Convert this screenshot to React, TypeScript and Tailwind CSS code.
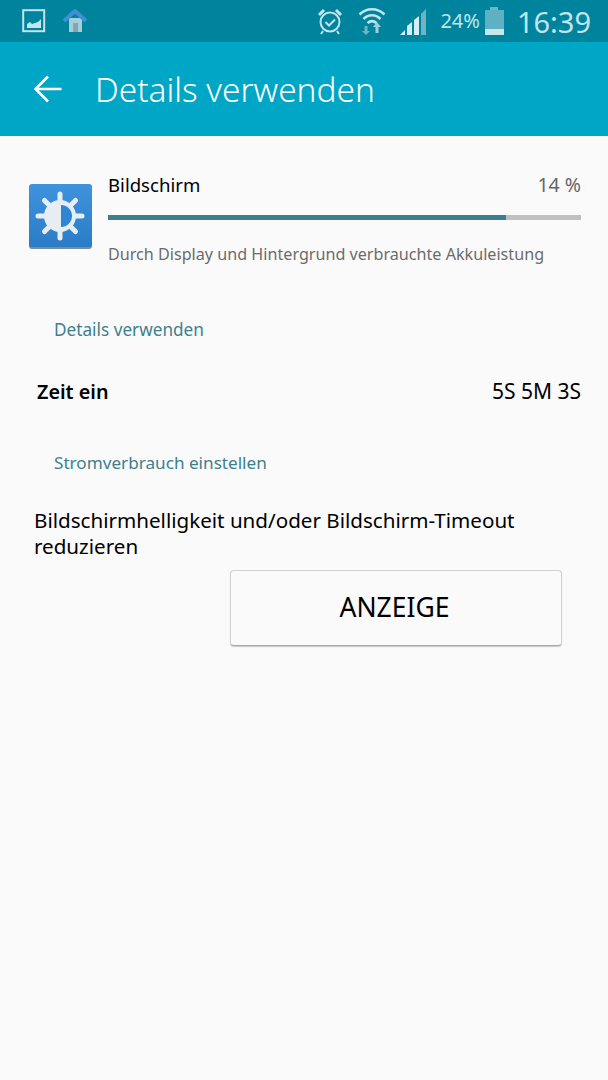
export default function App() {
  return (
    <div className="w-[608px] h-[1080px] bg-[#fafafa] flex flex-col overflow-hidden" style={{ fontFamily: '"Noto Sans", sans-serif' }}>
      <div className="h-[42px] bg-[#00849d] flex items-center pl-[22px] pr-[17px] text-[#c0e5ec]">
        <svg width="24" height="24" viewBox="0 0 24 24" className="text-[#c4e4ea]">
          <rect x="1.2" y="1.2" width="21" height="21" fill="none" stroke="currentColor" strokeWidth="2" />
          <path d="M5 19v-4l3-2 2 2 3-1 3-1 3-3v9z" fill="currentColor" />
        </svg>
        <svg width="26" height="26" viewBox="0 0 26 26" className="ml-[16px]">
          <rect x="7" y="10" width="13" height="14" fill="#a9cdd8" />
          <rect x="11" y="15" width="5" height="9" fill="#7fa6b4" />
          <path d="M2 13 13 3l11 10" fill="none" stroke="#3f8fd8" strokeWidth="4" strokeLinejoin="round" />
        </svg>
        <div className="flex-1" />
        <svg width="28" height="28" viewBox="0 0 28 28" fill="none" stroke="currentColor" className="-mt-[1px]">
          <circle cx="14" cy="15" r="9.5" strokeWidth="2" />
          <path d="M9.5 15l3.5 3.5 6-6" strokeWidth="2" />
          <path d="M3 8l5-5M25 8l-5-5" strokeWidth="3" />
          <path d="M7 24l-2 3M21 24l2 3" strokeWidth="2" />
        </svg>
        <svg width="28" height="30" viewBox="0 0 28 30" className="ml-[14px]" fill="none" stroke="currentColor">
          <path d="M1.5 8.5c7-7 18-7 25 0" strokeWidth="2.6" />
          <path d="M5.5 13c5-5 12-5 17 0" strokeWidth="2.6" />
          <path d="M9.5 17c3-2.500 6-2.500 9 0" strokeWidth="2.600" />
          <path d="M8 29l-4-4h2.500v-5h3v5H12z" fill="#6fb4c4" stroke="none" />
          <path d="M19 16l4 5h-2.500v6h-3v-6H15z" fill="#9ed0db" stroke="none" />
        </svg>
        <svg width="27" height="28" viewBox="0 0 27 28" className="ml-[14px]">
          <path d="M0 28l5-5v5z" fill="#d5eef3" />
          <path d="M7 28v-9l5-4v13z" fill="#d5eef3" />
          <path d="M14 28V13l5-4v19z" fill="#d5eef3" />
          <path d="M21 28V7l5-5v26z" fill="#6fb4c4" />
        </svg>
        <span className="ml-[13px] text-[20px] leading-none">24%</span>
        <div className="ml-[5px] w-[19px] h-[28px] flex flex-col items-center">
          <div className="w-[8px] h-[3px] bg-[#6fb4c4]" />
          <div className="w-[19px] flex-1 bg-[#5fb0c2]" />
          <div className="w-[19px] h-[6px] bg-[#c6e6ec]" />
        </div>
        <span className="ml-[13px] text-[29px] leading-none">16:39</span>
      </div>

      <div className="h-[94px] bg-[#00a6c5] flex items-center pl-[34px] text-white">
        <svg width="28" height="28" viewBox="0 0 28 28" fill="none" stroke="currentColor" strokeWidth="2.6">
          <path d="M1.500 14H27.500M14 1.500 1.500 14 14 26.500" />
        </svg>
        <span className="ml-[33px] mt-[2px] text-[33.400px] leading-none font-light">Details verwenden</span>
      </div>

      <div className="flex pt-[37px] pl-[28px] pr-[27px]">
        <svg width="65" height="66" viewBox="0 0 65 66" className="mt-[11px] shrink-0">
          <defs>
            <linearGradient id="g" x1="0" y1="0" x2="0" y2="1">
              <stop offset="0" stopColor="#3f93dc" />
              <stop offset="1" stopColor="#2a7cc6" />
            </linearGradient>
          </defs>
          <rect x="1" y="1" width="63" height="64" rx="3" fill="#7f8b92" />
          <rect x="1" y="0" width="63" height="63" rx="3" fill="url(#g)" />
          <g stroke="#e6eef4" strokeWidth="5" strokeLinecap="round">
            <path d="M32 10v8M32 46v8M10 32h8M46 32h8M16.500 16.500l6 6M41.500 41.500l6 6M16.500 47.500l6-6M41.500 22.500l6-6" />
          </g>
          <circle cx="32" cy="32" r="16" fill="#e6eef4" />
          <path d="M33 21a11 11 0 0 1 0 22z" fill="#2f87d3" />
        </svg>
        <div className="ml-[15px] flex-1">
          <div className="flex justify-between items-center h-[24px]">
            <span className="text-[18.600px] text-black">Bildschirm</span>
            <span className="text-[19.500px] text-[#666]">14 %</span>
          </div>
          <div className="mt-[18px] h-[5px] bg-[#c0c0c0]">
            <div className="h-full bg-[#3e7f8e] w-[398px]" />
          </div>
          <div className="mt-[22px] text-[16.150px] leading-[24px] text-[#6b6b6b] whitespace-nowrap">Durch Display und Hintergrund verbrauchte Akkuleistung</div>
        </div>
      </div>

      <div className="mt-[52px] pl-[54px] text-[17.200px] leading-[24px] text-[#3d7f8e]">Details verwenden</div>

      <div className="mt-[37px] pl-[37px] pr-[27px] flex justify-between items-center h-[26px] text-black">
        <span className="font-semibold text-[19.800px]">Zeit ein</span>
        <span className="text-[21px]">5S 5M 3S</span>
      </div>

      <div className="mt-[46px] pl-[54px] text-[17.150px] leading-[24px] text-[#3d7f8e]">Stromverbrauch einstellen</div>

      <div className="mt-[32px] pl-[34px] pr-[40px] text-[20.600px] leading-[26px] text-black">Bildschirmhelligkeit und/oder Bildschirm-Timeout reduzieren</div>

      <div className="mt-[11px] ml-[230px] w-[332px] h-[76px] border border-[#d0d0d0] border-b-[#aaa] rounded-[4px] shadow-[0_1px_1px_rgba(0,0,0,0.2)] bg-[#fafafa] flex items-center justify-center pr-[3px] text-[26.500px] text-black">ANZEIGE</div>
    </div>
  );
}
